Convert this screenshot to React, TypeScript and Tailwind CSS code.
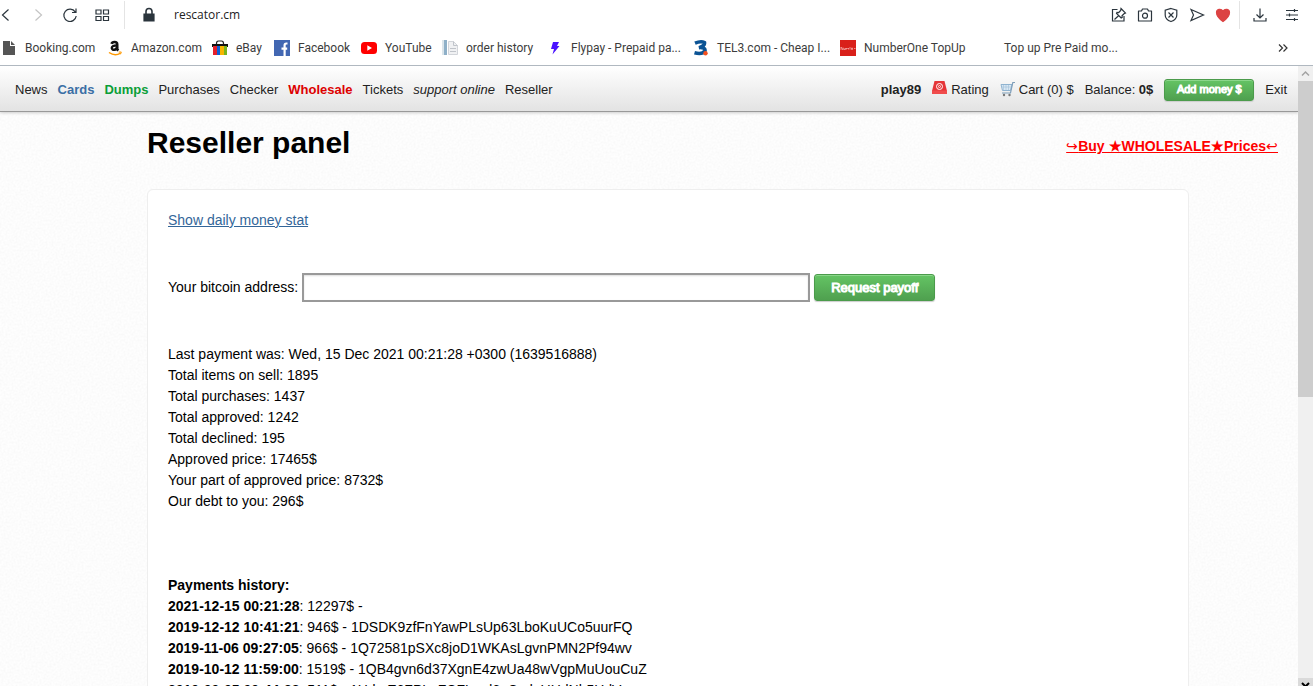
import { ReactNode, useState } from 'react'
import clsx from 'clsx'

const BOOKMARKS: { label: string; width: string; icon: ReactNode }[] = [
  {
    label: 'Booking.com', width: 'w-[106px]',
    icon: (
      <svg viewBox="0 0 16 16" className="size-4 shrink-0">
        <path d="M2 1h7v5h5v9H2z" fill="#555" />
        <path d="M10 1l4 4h-4z" fill="#555" />
      </svg>
    ),
  },
  {
    label: 'Amazon.com', width: 'w-[105px]',
    icon: (
      <svg viewBox="0 0 16 16" className="size-4 shrink-0" fill="none">
        <path d="M4.600 3.800C5.200 1.600 10.200 1.200 10.200 4.400v4.200c0 1 .5 1.400 1.100 2" stroke="#111" strokeWidth="2.600" />
        <path d="M9.800 5.400C6 5.400 4.800 6.600 4.800 8.100c0 2.400 4.800 2.300 5.200-1.100" stroke="#111" strokeWidth="2.400" />
        <path d="M2 12.500c4 2.800 8.500 2.600 11.500.6" stroke="#f90" strokeWidth="1.500" />
        <path d="M11.700 12h2.600l-.8 2.300" stroke="#f90" />
      </svg>
    ),
  },
  {
    label: 'eBay', width: 'w-[62px]',
    icon: (
      <svg viewBox="0 0 16 16" className="size-4 shrink-0">
        <path d="M4.500 5V3.500Q4.500 1 6.500 1h3q2 0 2 2.500V5" fill="none" stroke="#222" strokeWidth="1.200" />
        <path d="M0 4h16v3H0z" fill="#111" />
        <path d="M1 6h4v9H1z" fill="#e5202b" />
        <path d="M5 6h3v9H5z" fill="#0b61d8" />
        <path d="M8 6h4v9H8z" fill="#f7b500" />
        <path d="M12 6h3v9h-3z" fill="#7ab51d" />
      </svg>
    ),
  },
  {
    label: 'Facebook', width: 'w-[87px]',
    icon: (
      <svg viewBox="0 0 16 16" className="size-4 shrink-0">
        <path d="M0 0h16v16H0z" fill="#4267b2" />
        <path d="M13.500 3.500h-1.200q-1.700 0-1.700 1.700V16M7.500 8.600h5.700" fill="none" stroke="#fff" strokeWidth="2.200" />
      </svg>
    ),
  },
  {
    label: 'YouTube', width: 'w-[81px]',
    icon: (
      <svg viewBox="0 0 16 16" className="size-4 shrink-0">
        <rect y="2" width="16" height="12" rx="3.500" fill="#f00" />
        <path d="M6.300 5.300L11 8l-4.700 2.700z" fill="#fff" />
      </svg>
    ),
  },
  {
    label: 'order history', width: 'w-[105px]',
    icon: (
      <svg viewBox="0 0 16 16" className="size-4 shrink-0">
        <path d="M0 0h2v15H0z" fill="#dbe5eb" />
        <path d="M2 0h3v15H2z" fill="#8fb0c8" />
        <path d="M6.500 1.500h5l4 4v9h-9z" fill="#f0f1f3" stroke="#d2d5da" />
        <path d="M11.500 1.500v4h4M8 8.500h6M8 11.500h6" fill="none" stroke="#c0c4ca" />
      </svg>
    ),
  },
  {
    label: 'Flypay - Prepaid pa...', width: 'w-[146px]',
    icon: (
      <svg viewBox="0 0 16 16" className="size-4 shrink-0">
        <path d="M6 2h6l-2 4h2.500L5.500 14.500 7 9H4z" fill="#4a12ff" />
      </svg>
    ),
  },
  {
    label: 'TEL3.com - Cheap I...', width: 'w-[147px]',
    icon: (
      <svg viewBox="0 0 16 16" className="size-4 shrink-0">
        <path d="M2 3.200Q8 .8 11.500 2.600 12 5.800 6 7.600q6.500-.4 6 3Q9.500 15 1.500 12.800" fill="none" stroke="#0b5394" strokeWidth="3.600" />
        <circle cx="12.500" cy="13.300" r="2.200" fill="#f4511e" />
      </svg>
    ),
  },
  {
    label: 'NumberOne TopUp', width: 'w-[140px]',
    icon: (
      <svg viewBox="0 0 16 16" className="size-4 shrink-0">
        <path d="M0 0h16v16H0z" fill="#d9201a" />
        <path d="M1 10V7l2 3V7.500M4 8v1.500h1.500V8M6.500 9.500V8l1 1 1-1v1.500M10 7v2.500M11.500 8h1v1.500h-1zM14 8.500h1.500" fill="none" stroke="#f6b9b6" strokeWidth=".7" />
      </svg>
    ),
  },
  { label: 'Top up Pre Paid mo...', width: 'w-[146px]', icon: <span className="size-4 shrink-0" /> },
]

const NAV = [
  { label: 'News', style: '' },
  { label: 'Cards', style: 'font-bold text-[#3a6ea5]' },
  { label: 'Dumps', style: 'font-bold text-[#0a9e37]' },
  { label: 'Purchases', style: '' },
  { label: 'Checker', style: '' },
  { label: 'Wholesale', style: 'font-bold text-[#dd0000]' },
  { label: 'Tickets', style: '' },
  { label: 'support online', style: 'italic' },
  { label: 'Reseller', style: '' },
]

const STATS = [
  'Last payment was: Wed, 15 Dec 2021 00:21:28 +0300 (1639516888)',
  'Total items on sell: 1895',
  'Total purchases: 1437',
  'Total approved: 1242',
  'Total declined: 195',
  'Approved price: 17465$',
  'Your part of approved price: 8732$',
  'Our debt to you: 296$',
]

const PAYMENTS = [
  { date: '2021-12-15 00:21:28', amount: '12297$', address: '' },
  { date: '2019-12-12 10:41:21', amount: '946$', address: '1DSDK9zfFnYawPLsUp63LboKuUCo5uurFQ' },
  { date: '2019-11-06 09:27:05', amount: '966$', address: '1Q72581pSXc8joD1WKAsLgvnPMN2Pf94wv' },
  { date: '2019-10-12 11:59:00', amount: '1519$', address: '1QB4gvn6d37XgnE4zwUa48wVgpMuUouCuZ' },
  { date: '2019-09-05 09:44:38', amount: '511$', address: '1HdmE6FPLnFCFLmd6gCydpUHdNh5HdVu' },
]

function ToolButton({ label, className, children }: { label: string; className?: string; children: ReactNode }) {
  return (
    <button aria-label={label} className={clsx('shrink-0', className)}>
      <svg viewBox="0 0 16 16" className="size-4" fill="none" stroke="currentColor" strokeWidth="1.200">
        {children}
      </svg>
    </button>
  )
}

function BrowserBar() {
  return (
    <div className="shrink-0 bg-white border-b border-[#b0b8c0] font-[Roboto,sans-serif] text-xs text-[#3c3c3c]">
      <div className="flex items-center h-[30px] pr-[13px] text-[#2b353d]">
        <ToolButton label="Back" className="-ml-px"><path d="M9.500 2.500L3.500 8l6 5.500" /></ToolButton>
        <ToolButton label="Forward" className="ml-[15px] text-[#c4c4c4]"><path d="M5.500 2.500l6 5.500-6 5.500" /></ToolButton>
        <ToolButton label="Reload" className="ml-4">
          <path d="M13.200 4.800A6.200 6.200 0 1 0 14.200 9M14 1.500V5.500h-4" />
        </ToolButton>
        <ToolButton label="Speed dial" className="ml-4">
          <path d="M2 3h5v4H2zM9.500 3h5v4h-5zM2 9.500h5v4H2zM9.500 9.500h5v4h-5z" />
        </ToolButton>
        <div className="ml-[14px] h-7 w-px bg-[#e4e4e4]" />
        <ToolButton label="Site information" className="ml-4">
          <path d="M3 7h10v7H3z" fill="currentColor" />
          <path d="M5 7V4.500a3 3 0 0 1 6 0V7" strokeWidth="1.600" />
        </ToolButton>
        <input
          aria-label="Address"
          defaultValue="rescator.cm"
          className="ml-[17px] min-w-0 flex-1 font-['Open_Sans',sans-serif] text-xs text-[#222] outline-none"
        />
        <div className="flex gap-[10px]">
          <ToolButton label="Edit page">
            <path d="M6.500 2.500h-5v11.500h11.500V9" />
            <path d="M10 1.500l4.500 4.500-1.500.8-2 2 .2 1.700-1 .5-4.700-4.700.5-1 1.700.2 2-2zM7.800 8.500L3.500 12.500" />
          </ToolButton>
          <ToolButton label="Snapshot">
            <path d="M1.500 4H4.500L5.500 2h5l1 2h3v10h-13z" strokeLinejoin="round" />
            <circle cx="8" cy="8.700" r="2.500" />
          </ToolButton>
          <ToolButton label="Ad blocker">
            <path d="M8 1.500l5.800 1.800V8c0 3.200-2.600 5.500-5.800 6.500C4.800 13.500 2.200 11.200 2.200 8V3.300zM5.500 5.500l5 5M10.500 5.500l-5 5" />
          </ToolButton>
          <ToolButton label="Send"><path d="M2 2.500L14.500 8 2 13.500 4.500 8z" /></ToolButton>
          <ToolButton label="Favourite" className="text-[#dc4343]">
            <path d="M8 14.500C3 11 1.500 8.500 1.500 5.500 1.500 2 6 1.200 8 4c2-2.800 6.500-2 6.500 1.500 0 3-1.500 5.500-6.500 9z" fill="currentColor" />
          </ToolButton>
        </div>
        <div className="ml-2 h-7 w-px bg-[#e4e4e4]" />
        <ToolButton label="Downloads" className="ml-3">
          <path d="M8 1.500v9M4.500 7.500L8 11l3.500-3.500M2 11v3h12v-3" />
        </ToolButton>
        <ToolButton label="Easy setup" className="ml-4">
          <path d="M2 3.500h12M2 8h12M2 12.500h12M10.500 2v3M5.500 6.500v3M10.500 11v3" />
        </ToolButton>
      </div>
      <div className="flex items-center h-[35px] pl-px pr-[22px]">
        {BOOKMARKS.map(b => (
          <a key={b.label} href="#" className={clsx('flex shrink-0 items-center gap-2 whitespace-nowrap', b.width)}>
            {b.icon}
            {b.label}
          </a>
        ))}
        <button aria-label="More bookmarks" className="ml-auto">
          <svg viewBox="0 0 16 16" className="size-4" fill="none" stroke="#333" strokeWidth="1.200">
            <path d="M4 4.500l3.500 3.500L4 11.500M8.500 4.500L12 8l-3.500 3.500" />
          </svg>
        </button>
      </div>
    </div>
  )
}

const greenButton =
  'rounded-[3px] border border-[#4b9b4b] bg-linear-to-b from-[#64c464] to-[#4fa04f] text-white [-webkit-text-stroke:1px_#fff] shadow-[inset_0_1px_0_#8ad68a,0_1px_1px_#ccc]'

function SiteHeader() {
  return (
    <header className="relative flex items-center justify-between h-[46px] pt-[3px] pl-[15px] pr-[11px] border-b border-[#999] bg-linear-to-b from-white to-[#e3e3e3] text-[13px] text-[#222] whitespace-nowrap shadow-[0_1px_3px_#ccc]">
      <nav className="flex gap-[10px]">
        {NAV.map(n => <a key={n.label} href="#" className={n.style}>{n.label}</a>)}
      </nav>
      <div className="flex items-center gap-[11px]">
        <a href="#" className="font-bold">play89</a>
        <a href="#" className="flex gap-1">
          <svg viewBox="0 0 15 16" className="h-4 w-[15px]">
            <path d="M2.500 0h10l2.500 10H0z" fill="#e53538" />
            <path d="M0 9.500h15V13H0z" fill="#f04c4c" />
            <circle cx="7.500" cy="5.500" r="3" fill="none" stroke="#fff" />
            <circle cx="7.500" cy="5.500" r="1" fill="none" stroke="#fff" strokeWidth=".8" />
          </svg>
          Rating
        </a>
        <a href="#" className="flex gap-1">
          <svg viewBox="0 0 15 16" className="h-4 w-[15px]" fill="none">
            <path d="M1 3.500h11l-1.500 6h-8z" fill="#d9e8f4" stroke="#8fb3d0" />
            <path d="M3.500 4v5M6 4v5M8.500 4v5M1.500 6h10" stroke="#a6c3da" strokeWidth=".7" />
            <path d="M15 1.500h-2.200L10.500 12H2" stroke="#7f9fba" strokeWidth="1.200" />
            <circle cx="4" cy="14" r="1.200" fill="#777" />
            <circle cx="9.500" cy="14" r="1.200" fill="#777" />
          </svg>
          Cart (0) $
        </a>
        <span>Balance: <b>0$</b></span>
        <button className={clsx(greenButton, 'h-[22px] w-[90px] text-[11px]')}>Add money $</button>
        <a href="#">Exit</a>
      </div>
    </header>
  )
}

/* woven paper look behind the card */
function PaperTexture() {
  return (
    <svg className="absolute inset-0 size-full" aria-hidden="true">
      <filter id="paper">
        <feTurbulence type="fractalNoise" baseFrequency="0.5" numOctaves="2" />
        <feColorMatrix values="0 0 0 0 0.5  0 0 0 0 0.5  0 0 0 0 0.5  0.16 0 0 0 -0.05" />
      </filter>
      <rect width="100%" height="100%" filter="url(#paper)" />
    </svg>
  )
}

function Scrollbar() {
  return (
    <div className="flex w-[15px] shrink-0 flex-col bg-[#f0f0f0]">
      <svg viewBox="0 0 15 15" className="size-[15px]" fill="none" stroke="#a3a3a3" strokeWidth="1.500">
        <path d="M4 9.500L7.500 6 11 9.500" />
      </svg>
      <div className="h-[51%] bg-[#cdcdcd]" />
      <div className="mt-auto flex h-2 justify-center overflow-hidden bg-[#dadada]">
        <svg viewBox="0 0 15 8" className="h-2 w-[15px]" fill="none" stroke="#000" strokeWidth="2">
          <path d="M4 5l3.500 3.500L11 5" />
        </svg>
      </div>
    </div>
  )
}

export default function App() {
  const [address, setAddress] = useState('')

  return (
    <div className="flex h-screen flex-col overflow-hidden bg-white font-['Liberation_Sans',Arial,sans-serif] text-sm text-black">
      <BrowserBar />
      <div className="flex min-h-0 flex-1">
        <div className="relative min-w-0 flex-1 overflow-hidden bg-[#fefefe]">
          <PaperTexture />
          <SiteHeader />
          <main className="relative">
            <div className="flex items-center justify-between pl-[147px] pr-5 pt-3">
              <h1 className="text-[30px] leading-[38px] font-bold">Reseller panel</h1>
              <a href="#" className="pt-[6px] font-bold text-[#f00] underline">
                <span className="font-normal">↪</span>Buy ★WHOLESALE★Prices<span className="font-normal">↩</span>
              </a>
            </div>
            <section className="mt-[27px] mr-[109px] ml-[147px] rounded-md border border-[#eee] bg-white p-5 leading-[21px]">
              <a href="#" className="block w-fit text-[#336699] underline">Show daily money stat</a>
              <form className="my-[42px] flex items-center gap-1" onSubmit={(e) => e.preventDefault()}>
                <label htmlFor="btc">Your bitcoin address:</label>
                <input
                  id="btc"
                  value={address}
                  onChange={(e) => setAddress(e.target.value)}
                  className="h-[29px] w-[508px] border-2 border-[#999] bg-white px-2 shadow-[inset_0_1px_2px_#ddd] outline-none"
                />
                <button className={clsx(greenButton, 'h-[27px] w-[121px] text-[13px]')}>Request payoff</button>
              </form>
              {STATS.map(s => <p key={s}>{s}</p>)}
              <h2 className="mt-[63px] font-bold">Payments history:</h2>
              {PAYMENTS.map(p => (
                <p key={p.date}><b>{p.date}</b>: {p.amount} - {p.address}</p>
              ))}
            </section>
          </main>
        </div>
        <Scrollbar />
      </div>
    </div>
  )
}
